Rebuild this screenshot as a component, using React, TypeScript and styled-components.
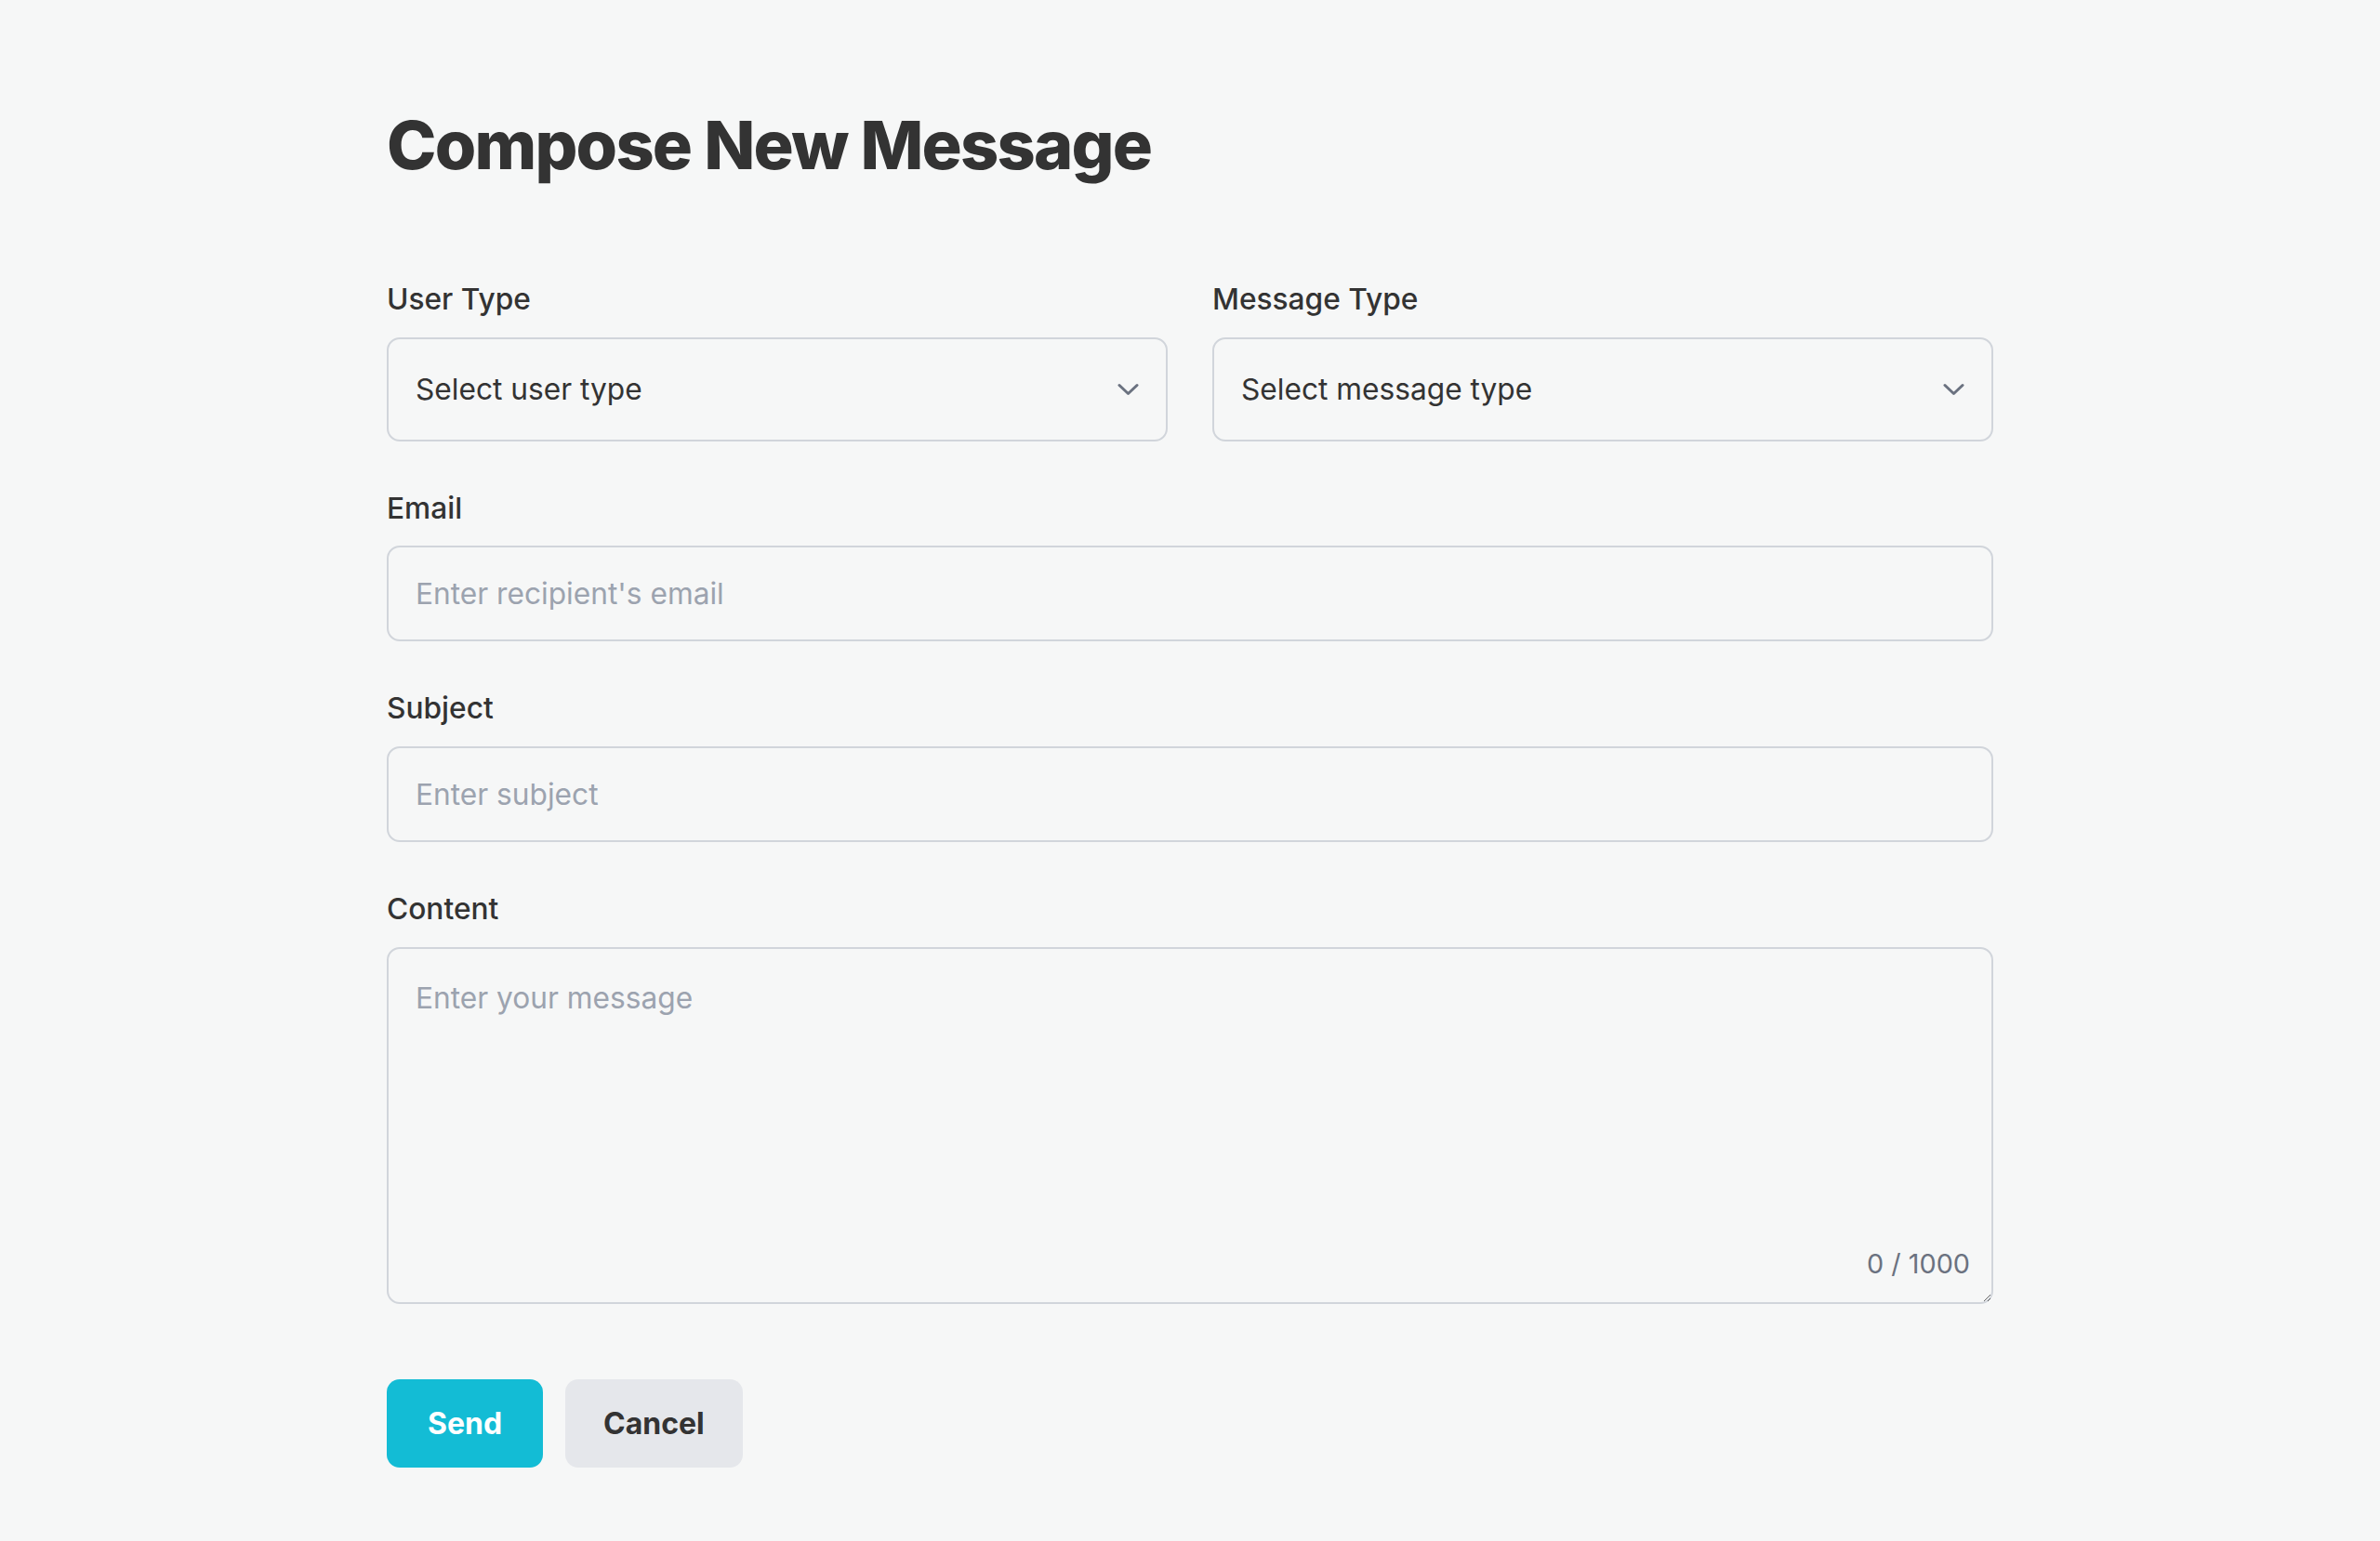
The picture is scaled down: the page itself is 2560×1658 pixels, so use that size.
import React, { useState } from 'react';
import styled, { createGlobalStyle } from 'styled-components';

const GlobalStyle = createGlobalStyle`
  html, body { margin: 0; padding: 0; background: #f6f7f7; }
  body { font-family: Inter, "Noto Sans", sans-serif; color: #333333; }
  *, *::before, *::after { box-sizing: border-box; }
`;

const Page = styled.main`
  max-width: 1728px;
  margin: 0 auto;
  padding: 113px 0 80px;
`;

const Title = styled.h1`
  margin: 0 0 99px;
  font-size: 72px;
  font-weight: 800;
  line-height: 1.2;
  letter-spacing: -0.025em;
  color: #333333;
`;

const Form = styled.form`
  display: flex;
  flex-direction: column;
  gap: 48px;
`;

const Row = styled.div`
  display: grid;
  grid-template-columns: 1fr 1fr;
  gap: 48px;
`;

const Field = styled.div`
  display: flex;
  flex-direction: column;
`;

const Label = styled.label`
  font-size: 31.68px;
  font-weight: 500;
  line-height: 1.5;
  margin-bottom: 17px;
  color: #333333;
`;

const SelectWrap = styled.div`
  position: relative;
`;

const Select = styled.select`
  appearance: none;
  -webkit-appearance: none;
  width: 100%;
  height: 112px;
  padding: 0 80px 0 29px;
  border: 2px solid #d1d5db;
  border-radius: 14px;
  background: transparent;
  font-family: Inter, "Noto Sans", sans-serif;
  font-size: 31.68px;
  color: #333333;
  outline: none;
`;

const Chevron = styled.svg`
  position: absolute;
  right: 31px;
  top: 50%;
  width: 23px;
  height: 13px;
  transform: translateY(-50%);
  pointer-events: none;
`;

const Input = styled.input`
  width: 100%;
  height: 103px;
  padding: 0 29px;
  border: 2px solid #d1d5db;
  border-radius: 14px;
  background: transparent;
  font-family: Inter, "Noto Sans", sans-serif;
  font-size: 31.68px;
  color: #333333;
  outline: none;
  &::placeholder { color: #9ca3af; }
`;

const AreaWrap = styled.div`
  position: relative;
`;

const TextArea = styled.textarea`
  display: block;
  width: 100%;
  height: 384px;
  padding: 29px 29px;
  border: 2px solid #d1d5db;
  border-radius: 14px;
  background: transparent;
  font-family: Inter, "Noto Sans", sans-serif;
  font-size: 31.68px;
  line-height: 1.5;
  color: #333333;
  outline: none;
  resize: vertical;
  &::placeholder { color: #9ca3af; }
`;

const Counter = styled.span`
  position: absolute;
  right: 25px;
  bottom: 21px;
  font-size: 28.8px;
  line-height: 1.5;
  color: #6b7280;
  pointer-events: none;
`;

const Actions = styled.div`
  display: flex;
  gap: 24px;
  margin-top: 33px;
`;

const Button = styled.button<{ $variant: 'primary' | 'secondary' }>`
  height: 95px;
  min-width: 168px;
  padding: 0 41px;
  border: none;
  border-radius: 14px;
  font-family: Inter, "Noto Sans", sans-serif;
  font-size: 32px;
  font-weight: 700;
  cursor: pointer;
  background: ${(p) => (p.$variant === 'primary' ? '#13bcd5' : '#e5e7eb')};
  color: ${(p) => (p.$variant === 'primary' ? '#ffffff' : '#333333')};
`;

const ChevronIcon = () => (
  <Chevron viewBox="0 0 23 13" fill="none">
    <path d="M2 2 L11.5 11 L21 2" stroke="#6b7280" strokeWidth="3" strokeLinecap="round" strokeLinejoin="round" />
  </Chevron>
);

export default function App() {
  const [content, setContent] = useState('');
  return (
    <>
      <GlobalStyle />
      <Page>
        <Title>Compose New Message</Title>
        <Form onSubmit={(e) => e.preventDefault()}>
          <Row>
            <Field>
              <Label htmlFor="userType">User Type</Label>
              <SelectWrap>
                <Select id="userType" defaultValue="">
                  <option value="" disabled>Select user type</option>
                  <option value="student">Student</option>
                  <option value="teacher">Teacher</option>
                </Select>
                <ChevronIcon />
              </SelectWrap>
            </Field>
            <Field>
              <Label htmlFor="messageType">Message Type</Label>
              <SelectWrap>
                <Select id="messageType" defaultValue="">
                  <option value="" disabled>Select message type</option>
                  <option value="notice">Notice</option>
                  <option value="personal">Personal</option>
                </Select>
                <ChevronIcon />
              </SelectWrap>
            </Field>
          </Row>
          <Field>
            <Label htmlFor="email">Email</Label>
            <Input id="email" type="email" placeholder="Enter recipient's email" />
          </Field>
          <Field>
            <Label htmlFor="subject">Subject</Label>
            <Input id="subject" type="text" placeholder="Enter subject" />
          </Field>
          <Field>
            <Label htmlFor="content">Content</Label>
            <AreaWrap>
              <TextArea
                id="content"
                placeholder="Enter your message"
                maxLength={1000}
                value={content}
                onChange={(e) => setContent(e.target.value)}
              />
              <Counter>{content.length} / 1000</Counter>
            </AreaWrap>
          </Field>
          <Actions>
            <Button type="submit" $variant="primary">Send</Button>
            <Button type="button" $variant="secondary">Cancel</Button>
          </Actions>
        </Form>
      </Page>
    </>
  );
}
